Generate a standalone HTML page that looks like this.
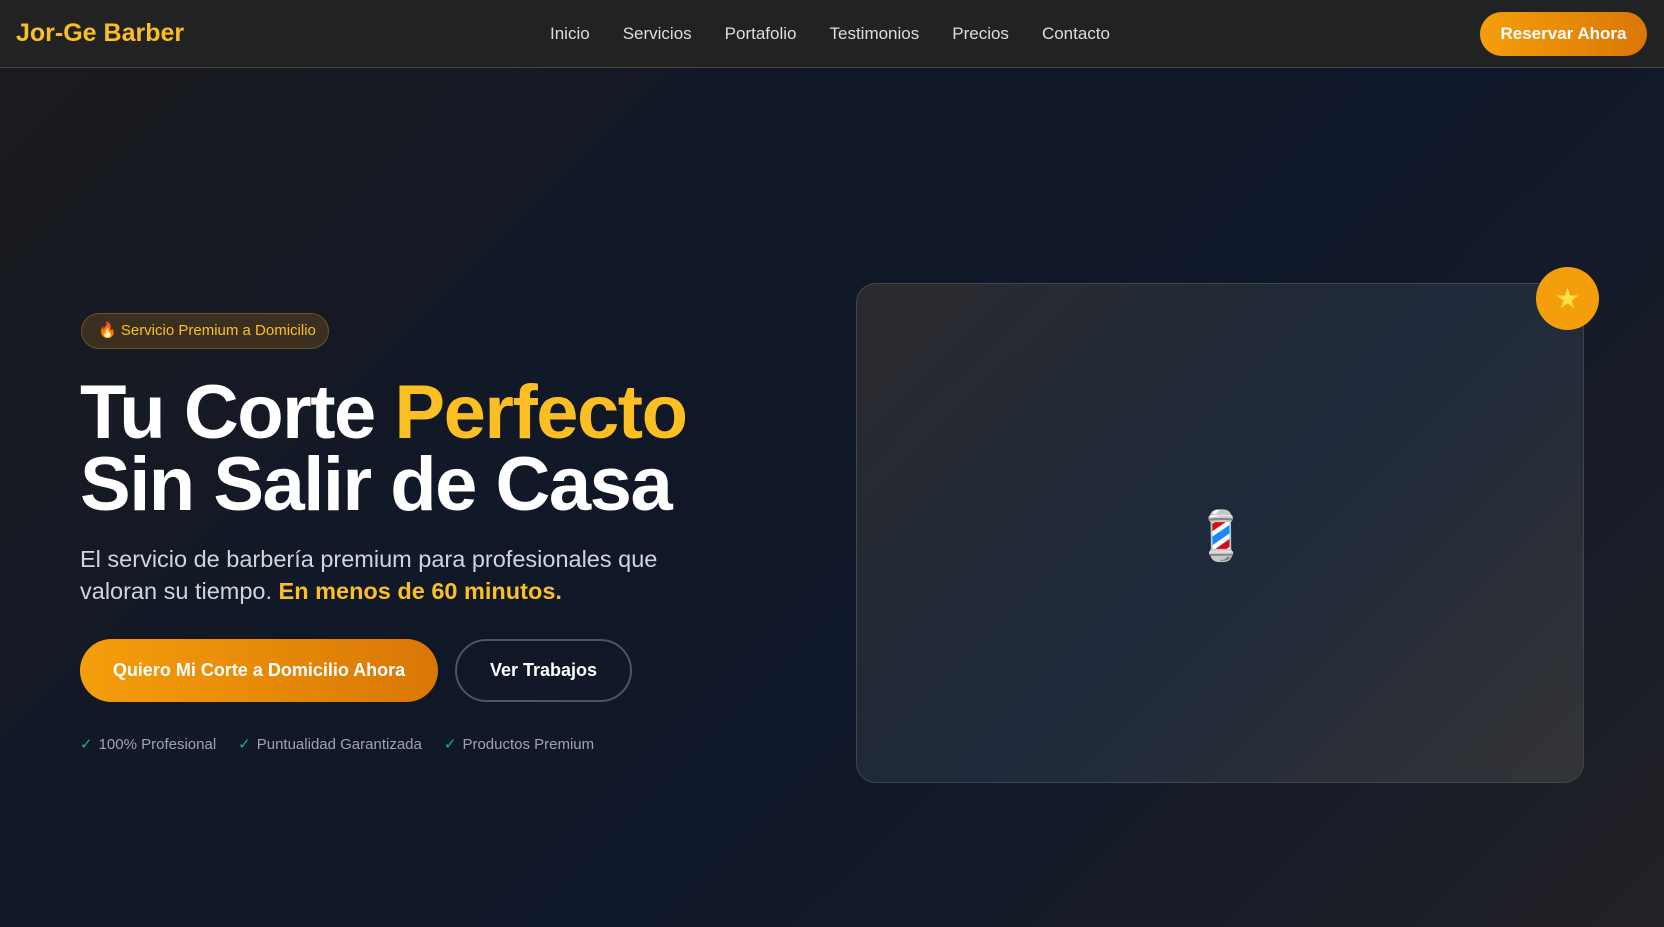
<!DOCTYPE html>
<html><head><meta charset="utf-8"><style>
*{margin:0;padding:0;box-sizing:border-box}
body{width:1664px;height:927px;overflow:hidden;font-family:"Liberation Sans",sans-serif;background:linear-gradient(135deg,#1c1c1e 0%,#111827 35%,#0f172a 60%,#222226 100%);color:#fff;position:relative}
nav{position:absolute;left:0;top:0;width:1664px;height:68px;background:#222;border-bottom:1px solid #444}
.logo{position:absolute;left:16px;top:19px;font-size:25px;font-weight:bold;color:#fbbf24}
.links{position:absolute;left:550px;top:24px;font-size:17px;color:#ddd}
.links span{margin-right:33px}
.rb{position:absolute;left:1480px;top:12px;width:167px;height:44px;border-radius:22px;background:linear-gradient(90deg,#f59e0b,#d97706);font-weight:bold;font-size:17px;text-align:center;line-height:44px}
.badge{position:absolute;left:81px;top:313px;width:248px;height:36px;border-radius:18px;background:#3b3020;border:1px solid #6b5420;color:#fbbf24;font-size:15px;line-height:34px;padding-left:16px}
h1{position:absolute;left:80px;top:377px;font-size:76px;line-height:72px;font-weight:bold;letter-spacing:-1.5px}
h1 em{font-style:normal;color:#fbbf24}
p.sub{position:absolute;left:80px;top:543px;font-size:23.5px;line-height:32px;color:#d1d5db;width:650px}
p.sub b{color:#fbbf24}
.b1{position:absolute;left:80px;top:639px;width:358px;height:63px;border-radius:32px;background:linear-gradient(90deg,#f59e0b,#d97706);font-weight:bold;font-size:18px;text-align:center;line-height:63px}
.b2{position:absolute;left:455px;top:639px;width:177px;height:63px;border-radius:32px;border:2px solid #4b5563;font-weight:bold;font-size:18px;text-align:center;line-height:59px}
.checks{position:absolute;left:80px;top:735px;font-size:15px;color:#9ca3af}
.checks span{margin-right:22px}.checks i{font-style:normal;color:#10b981;margin-right:6px}
.card{position:absolute;left:856px;top:283px;width:728px;height:500px;border-radius:20px;border:1px solid #3f4552;background:linear-gradient(135deg,#2a2a2c 0%,#1e293b 50%,#343436 100%)}
.pole{position:absolute;left:1191px;top:512px;font-size:48px;line-height:1;font-family:"Noto Color Emoji",sans-serif}
.star{position:absolute;left:1536px;top:267px;width:63px;height:63px;border-radius:50%;background:#f59e0b;text-align:center;line-height:63px;font-size:28px;color:#fde047}
</style></head><body>
<nav><div class="logo">Jor-Ge Barber</div>
<div class="links"><span>Inicio</span><span>Servicios</span><span>Portafolio</span><span>Testimonios</span><span>Precios</span><span>Contacto</span></div>
<div class="rb">Reservar Ahora</div></nav>
<div class="badge">🔥 Servicio Premium a Domicilio</div>
<h1>Tu Corte <em>Perfecto</em><br>Sin Salir de Casa</h1>
<p class="sub">El servicio de barbería premium para profesionales que valoran su tiempo. <b>En menos de 60 minutos.</b></p>
<div class="b1">Quiero Mi Corte a Domicilio Ahora</div>
<div class="b2">Ver Trabajos</div>
<div class="checks"><span><i>✓</i>100% Profesional</span><span><i>✓</i>Puntualidad Garantizada</span><span><i>✓</i>Productos Premium</span></div>
<div class="card"></div>
<div class="pole">💈</div>
<div class="star">★</div>
</body></html>
